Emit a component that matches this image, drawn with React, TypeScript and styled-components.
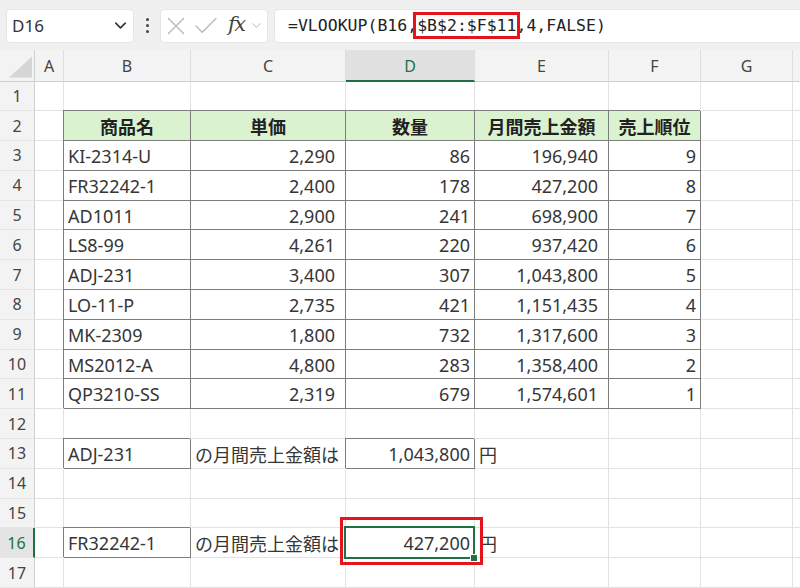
import styled, { createGlobalStyle, css } from "styled-components";
import { ChevronDown, X, Check } from "lucide-react";

const GRID = "#e2e2e2";
const LINE = "#7d7d7d";
const GREEN = "#1e7145";
const RED = "#e5131b";

const GlobalStyle = createGlobalStyle`
  html, body {
    margin: 0;
    padding: 0;
    background: #fff;
  }
  body {
    font-family: "Noto Sans", "Noto Sans CJK JP", sans-serif;
    overflow: hidden;
  }
`;

const Page = styled.div`
  width: 800px;
  height: 588px;
  overflow: hidden;
  background: #fff;
`;

const Toolbar = styled.div`
  height: 50px;
  box-sizing: border-box;
  background: #f0f0f0;
  display: flex;
  align-items: center;
  gap: 8px;
  padding: 1px 0 0 7px;
`;

const Panel = styled.div`
  height: 32px;
  box-sizing: border-box;
  background: #fff;
  border-radius: 4px;
  box-shadow: 0 0 0 1px #e6e6e6;
  display: flex;
  align-items: center;
`;

const NameBox = styled(Panel)`
  width: 126px;
  justify-content: space-between;
  padding: 0 3px 0 5px;
  font-size: 17px;
  color: #333;
`;

const Dots = styled.div`
  width: 12px;
  display: flex;
  flex-direction: column;
  align-items: center;
  gap: 3px;

  span {
    width: 3px;
    height: 3px;
    border-radius: 50%;
    background: #444;
  }
`;

const Actions = styled(Panel)`
  width: 106px;
  color: #b8b8b8;
`;

const Fx = styled.span`
  font-family: "DejaVu Serif", serif;
  font-style: italic;
  font-size: 21px;
  color: #444;
  margin-left: 7px;
  letter-spacing: -1.5px;
  line-height: 1;
  padding-bottom: 3px;
`;

const FormulaBox = styled(Panel)`
  flex: 1;
  margin-right: -12px;
  padding-left: 13px;
  font-family: "DejaVu Sans Mono", monospace;
  font-size: 16.5px;
  color: #222;
  white-space: pre;
`;

const Marked = styled.span`
  outline: 3px solid ${RED};
  outline-offset: 1px;
`;

const Sheet = styled.div`
  display: grid;
  grid-template-columns: 35px 29px 127px 155px 129px 134px 92px 92px 7px;
  grid-template-rows: 31.5px repeat(17, 29.8px);
`;

const Corner = styled.div`
  background: #f3f3f3;
  border-right: 1px solid #cfcfcf;
  border-bottom: 1px solid #cfcfcf;
  box-sizing: border-box;
  display: flex;
  justify-content: flex-end;
  align-items: flex-end;
  padding: 0 2px 3px 0;

  &::after {
    content: "";
    width: 23px;
    height: 21px;
    background: #d6d6d6;
    clip-path: polygon(0 100%, 100% 100%, 100% 0);
  }
`;

const ColHead = styled.div<{ $active?: boolean; $last?: boolean }>`
  box-sizing: border-box;
  background: #f3f3f3;
  border-bottom: 1px solid #cfcfcf;
  border-right: 1px solid ${({ $last }) => ($last ? "transparent" : "#dedede")};
  display: flex;
  align-items: center;
  justify-content: center;
  font-size: 16px;
  color: #444;
  padding-top: 2px;

  ${({ $active }) =>
    $active &&
    css`
      background: #e1e1e1;
      color: ${GREEN};
      border-bottom: 2px solid ${GREEN};
    `}
`;

const RowHead = styled.div<{ $active?: boolean }>`
  box-sizing: border-box;
  background: #f3f3f3;
  border-right: 1px solid #cfcfcf;
  border-bottom: 1px solid #e6e6e6;
  display: flex;
  align-items: center;
  justify-content: center;
  font-size: 16px;
  color: #444;

  ${({ $active }) =>
    $active &&
    css`
      background: #e4e4e4;
      color: ${GREEN};
      border-right: 2px solid ${GREEN};
    `}
`;

type Align = "left" | "right" | "center";

const Cell = styled.div<{
  $align?: Align;
  $box?: boolean;
  $head?: boolean;
  $pad?: number;
  $selected?: boolean;
}>`
  box-sizing: border-box;
  border-right: 1px solid ${GRID};
  border-bottom: 1px solid ${GRID};
  display: flex;
  align-items: center;
  justify-content: ${({ $align }) =>
    $align === "right" ? "flex-end" : $align === "center" ? "center" : "flex-start"};
  padding: 1px ${({ $pad }) => $pad ?? 4}px 0 4px;
  font-size: 18px;
  color: #363636;
  white-space: nowrap;

  ${({ $box }) =>
    $box &&
    css`
      border-right-color: ${LINE};
      border-bottom-color: ${LINE};
      box-shadow: -1px -1px 0 0 ${LINE};
    `}

  ${({ $head }) =>
    $head &&
    css`
      background: #daf2d0;
      font-weight: 700;
      color: #222;
    `}

  ${({ $selected }) =>
    $selected &&
    css`
      position: relative;
    `}
`;

const Selection = styled.div`
  position: absolute;
  left: -2px;
  top: -2px;
  right: -1px;
  bottom: -2px;
  border: 2px solid ${GREEN};
  pointer-events: none;

  &::after {
    content: "";
    position: absolute;
    right: -5px;
    bottom: -5px;
    width: 6px;
    height: 6px;
    background: ${GREEN};
    border: 1px solid #fff;
  }
`;

const RedFrame = styled.div`
  position: absolute;
  left: -6px;
  top: -11px;
  right: -9px;
  bottom: -8px;
  border: 3px solid ${RED};
  pointer-events: none;
`;

type CellDef = {
  text?: string;
  align?: Align;
  box?: boolean;
  head?: boolean;
  pad?: number;
  selected?: boolean;
};

const products = [
  ["KI-2314-U", "2,290", "86", "196,940", "9"],
  ["FR32242-1", "2,400", "178", "427,200", "8"],
  ["AD1011", "2,900", "241", "698,900", "7"],
  ["LS8-99", "4,261", "220", "937,420", "6"],
  ["ADJ-231", "3,400", "307", "1,043,800", "5"],
  ["LO-11-P", "2,735", "421", "1,151,435", "4"],
  ["MK-2309", "1,800", "732", "1,317,600", "3"],
  ["MS2012-A", "4,800", "283", "1,358,400", "2"],
  ["QP3210-SS", "2,319", "679", "1,574,601", "1"],
];

const headers = ["商品名", "単価", "数量", "月間売上金額", "売上順位"];
const columns = ["A", "B", "C", "D", "E", "F", "G"];

const empty = (): CellDef[] => Array.from({ length: 8 }, () => ({}));

function buildRows(): CellDef[][] {
  const rows: CellDef[][] = [];
  rows.push(empty());
  rows.push([
    {},
    ...headers.map((h) => ({ text: h, align: "center" as Align, box: true, head: true })),
    {},
    {},
  ]);
  products.forEach(([name, price, qty, amount, rank]) => {
    rows.push([
      {},
      { text: name, box: true },
      { text: price, align: "right", box: true, pad: 10 },
      { text: qty, align: "right", box: true },
      { text: amount, align: "right", box: true, pad: 10 },
      { text: rank, align: "right", box: true },
      {},
      {},
    ]);
  });
  rows.push(empty());
  rows.push([
    {},
    { text: "ADJ-231", box: true },
    { text: "の月間売上金額は" },
    { text: "1,043,800", align: "right", box: true },
    { text: "円" },
    {},
    {},
    {},
  ]);
  rows.push(empty());
  rows.push(empty());
  rows.push([
    {},
    { text: "FR32242-1", box: true },
    { text: "の月間売上金額は" },
    { text: "427,200", align: "right", box: true, selected: true },
    { text: "円" },
    {},
    {},
    {},
  ]);
  rows.push(empty());
  return rows;
}

const rows = buildRows();

export default function App() {
  return (
    <Page>
      <GlobalStyle />
      <Toolbar>
        <NameBox>
          <span>D16</span>
          <ChevronDown size={19} strokeWidth={2} color="#333" />
        </NameBox>
        <Dots>
          <span />
          <span />
          <span />
        </Dots>
        <Actions>
          <X size={30} strokeWidth={1.1} />
          <Check size={30} strokeWidth={1.1} />
          <Fx>fx</Fx>
          <ChevronDown size={15} strokeWidth={1.6} style={{ marginLeft: 4 }} />
        </Actions>
        <FormulaBox>
          =VLOOKUP(B16,<Marked>$B$2:$F$11</Marked>,4,FALSE)
        </FormulaBox>
      </Toolbar>
      <Sheet>
        <Corner />
        {columns.map((c) => (
          <ColHead key={c} $active={c === "D"}>
            {c}
          </ColHead>
        ))}
        <ColHead $last />
        {rows.map((row, i) => (
          <Row key={i} index={i + 1} cells={row} />
        ))}
      </Sheet>
    </Page>
  );
}

function Row({ index, cells }: { index: number; cells: CellDef[] }) {
  return (
    <>
      <RowHead $active={index === 16}>{index}</RowHead>
      {cells.map((c, j) => (
        <Cell
          key={j}
          $align={c.align}
          $box={c.box}
          $head={c.head}
          $pad={c.pad}
          $selected={c.selected}
        >
          {c.text}
          {c.selected && (
            <>
              <Selection />
              <RedFrame />
            </>
          )}
        </Cell>
      ))}
    </>
  );
}
